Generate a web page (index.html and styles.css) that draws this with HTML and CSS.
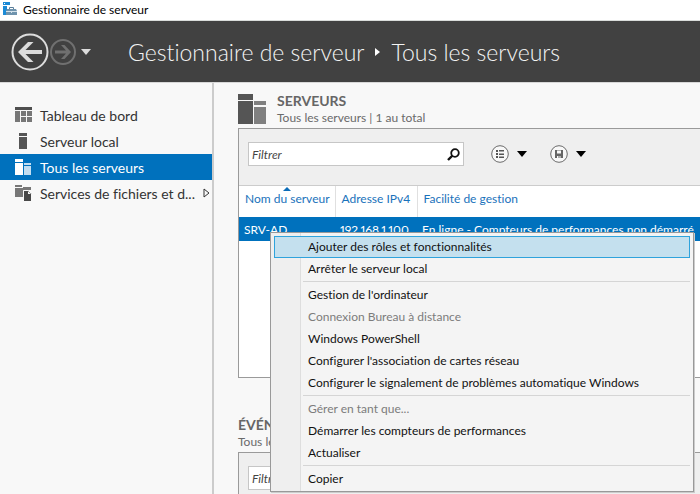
FILE: index.html
```html
<!DOCTYPE html>
<html lang="fr">
<head>
<meta charset="utf-8">
<title>Gestionnaire de serveur</title>
<link rel="stylesheet" href="styles.css">
</head>
<body>
<div class="window">
  <div class="titlebar">
    <svg class="app-icon" width="14" height="14" viewBox="0 0 14 14" aria-hidden="true">
      <path fill="#1b8ad6" d="M0 0h7v3H0zM0 4h4v9H0z"/>
      <path fill="#fff" d="M1 1h1v1H1z"/>
      <path fill="none" stroke="#5b7f9b" d="M6.500 7V5.500h4V7"/>
      <path fill="#6f93ad" d="M4 7h9l1 2v4H3V9z"/>
      <path fill="#d5e2eb" d="M3 9h11v1H3zM8 9h1v2H8z"/>
    </svg>
    <span>Gestionnaire de serveur</span>
  </div>

  <header class="banner">
    <div class="history">
      <button class="icon-button" type="button" aria-label="Précédent">
        <svg width="38" height="38" viewBox="0 0 38 38"><circle cx="19" cy="19" r="17.500" fill="none" stroke="#dcdcdc" stroke-width="2"/><path fill="#dcdcdc" d="M7 19L17 9h5.500l-8 8H31v4H14.500l8 8H17z"/></svg>
      </button>
      <button class="icon-button" type="button" aria-label="Suivant" disabled>
        <svg width="26" height="26" viewBox="0 0 26 26"><circle cx="13" cy="13" r="12" fill="none" stroke="#707070" stroke-width="2"/><path fill="#707070" d="M21 13l-6.500-7H11l5 5.500H5v3h11L11 20h3.500z"/></svg>
      </button>
      <button class="icon-button history-more" type="button" aria-label="Historique">
        <svg width="10" height="6" viewBox="0 0 10 6"><path fill="#dcdcdc" d="M0 0h10L5 6z"/></svg>
      </button>
    </div>
    <h1 class="crumbs">
      <span>Gestionnaire de serveur</span>
      <svg width="5" height="8" viewBox="0 0 5 8" aria-hidden="true"><path fill="#fff" d="M0 0l5 4-5 4z"/></svg>
      <span>Tous les serveurs</span>
    </h1>
  </header>

  <div class="body">
    <nav class="sidebar">
      <a class="nav-item" href="#">
        <svg width="17" height="16" viewBox="0 0 17 16"><path fill="#4f4f4f" d="M0 0h17v3H0z"/><path fill="#777" d="M0 4h5v11H0zM6 4h5v5H6zM12 4h5v5h-5zM6 10h5v5H6zM12 10h5v5h-5z"/></svg>
        <span class="nav-label">Tableau de bord</span>
      </a>
      <a class="nav-item" href="#">
        <svg width="17" height="16" viewBox="0 0 17 16"><path fill="#555" d="M4 0h8v3H4zM4 4h8v12H4z"/></svg>
        <span class="nav-label">Serveur local</span>
      </a>
      <a class="nav-item selected" href="#" aria-current="page">
        <svg width="17" height="16" viewBox="0 0 17 16"><path fill="#fff" d="M0 0h8v3H0zM0 4h8v12H0z"/><path fill="#c3def1" d="M9 4h7v2H9zM9 7h7v9H9z"/></svg>
        <span class="nav-label">Tous les serveurs</span>
      </a>
      <a class="nav-item" href="#">
        <svg width="17" height="16" viewBox="0 0 17 16"><path fill="#777" d="M0 0h7v2H0zM0 3h8v9H0zM8 2h8v3H8z"/><path fill="#484848" stroke="#f8f8f8" d="M8.500 5.500h5l3 3v8h-8z"/><path fill="#f8f8f8" d="M13 6v3h3z"/></svg>
        <span class="nav-label">Services de fichiers et d...</span>
        <svg class="expander" width="7" height="10" viewBox="0 0 7 10"><path fill="none" stroke="#333" d="M1 1l5 4-5 4z"/></svg>
      </a>
    </nav>

    <main class="content">
      <section class="tile">
        <div class="tile-head">
          <svg width="28" height="30" viewBox="0 0 28 30" aria-hidden="true"><path fill="#555" d="M0 0h15v6H0zM0 7h15v23H0z"/><path fill="#808080" d="M16 7h12v4H16zM16 13h12v17H16z"/></svg>
          <div>
            <h2 class="tile-title">SERVEURS</h2>
            <p class="tile-sub">Tous les serveurs | 1 au total</p>
          </div>
        </div>
        <div class="panel servers">
          <div class="toolbar">
            <div class="filter">
              <input class="filter-input" type="text" placeholder="Filtrer" aria-label="Filtrer les serveurs">
              <button class="icon-button" type="button" aria-label="Rechercher">
                <svg width="13" height="13" viewBox="0 0 13 13"><circle cx="8" cy="5" r="3.800" fill="none" stroke="#111" stroke-width="1.800"/><path stroke="#111" stroke-width="2.400" d="M5.500 7.500L1 12"/></svg>
              </button>
            </div>
            <button class="icon-button tool" type="button" aria-label="Critères">
              <svg width="18" height="18" viewBox="0 0 18 18"><circle cx="9" cy="9" r="8.300" fill="#f8f8f8" stroke="#6b6b6b"/><path fill="#555" d="M5 5h2v2H5zM8 5h5v1.500H8zM5 8h2v2H5zM8 8.500h5V10H8zM5 11h2v2H5zM8 11.500h5V13H8z"/></svg>
              <svg width="10" height="6" viewBox="0 0 10 6"><path fill="#000" d="M0 0h10L5 6z"/></svg>
            </button>
            <button class="icon-button tool" type="button" aria-label="Enregistrer">
              <svg width="18" height="18" viewBox="0 0 18 18"><circle cx="9" cy="9" r="8.300" fill="#f8f8f8" stroke="#6b6b6b"/><path fill="#666" d="M5 5h8v8H5z"/><path fill="#f8f8f8" d="M7 5.500h4v3H7zM7 11h1.500v2H7zM9.500 11h1v2h-1z"/></svg>
              <svg width="10" height="6" viewBox="0 0 10 6"><path fill="#000" d="M0 0h10L5 6z"/></svg>
            </button>
          </div>
          <table class="grid">
            <thead>
              <tr>
                <th class="col-name" aria-sort="ascending">Nom du serveur<svg class="sort" width="8" height="4" viewBox="0 0 8 4"><path fill="#0b6cb8" d="M0 4l4-4 4 4z"/></svg></th>
                <th class="col-ip">Adresse IPv4</th>
                <th>Facilité de gestion</th>
              </tr>
            </thead>
            <tbody>
              <tr>
                <td>SRV-AD</td>
                <td>192.168.1.100</td>
                <td>En ligne - Compteurs de performances non démarré</td>
              </tr>
            </tbody>
          </table>

          <div class="menu" role="menu">
            <button class="menu-item active" type="button" role="menuitem">Ajouter des rôles et fonctionnalités</button>
            <button class="menu-item" type="button" role="menuitem">Arrêter le serveur local</button>
            <hr class="menu-line">
            <button class="menu-item" type="button" role="menuitem">Gestion de l'ordinateur</button>
            <button class="menu-item" type="button" role="menuitem" disabled>Connexion Bureau à distance</button>
            <button class="menu-item" type="button" role="menuitem">Windows PowerShell</button>
            <button class="menu-item" type="button" role="menuitem">Configurer l'association de cartes réseau</button>
            <button class="menu-item" type="button" role="menuitem">Configurer le signalement de problèmes automatique Windows</button>
            <hr class="menu-line">
            <button class="menu-item" type="button" role="menuitem" disabled>Gérer en tant que...</button>
            <button class="menu-item" type="button" role="menuitem">Démarrer les compteurs de performances</button>
            <button class="menu-item" type="button" role="menuitem">Actualiser</button>
            <hr class="menu-line">
            <button class="menu-item" type="button" role="menuitem">Copier</button>
          </div>
        </div>
      </section>

      <section class="tile">
        <div class="tile-head">
          <div>
            <h2 class="tile-title">ÉVÉN</h2>
            <p class="tile-sub">Tous le</p>
          </div>
        </div>
        <div class="panel">
          <div class="toolbar">
            <div class="filter">
              <input class="filter-input" type="text" placeholder="Filtrer" aria-label="Filtrer les événements">
            </div>
          </div>
        </div>
      </section>
    </main>
  </div>
</div>
</body>
</html>
```
FILE: styles.css
```css
* {
  box-sizing: border-box;
}

body {
  margin: 0;
  font-family: Lato, "Open Sans", sans-serif;
  font-size: 12px;
  font-variant-ligatures: none;
  color: #333;
  background: #f8f8f8;
}

svg {
  flex: none;
  display: block;
}

h1, h2, p {
  margin: 0;
}

button, input {
  font: inherit;
  font-variant-ligatures: none;
}

.window {
  display: flex;
  flex-direction: column;
  height: 100vh;
  overflow: hidden;
}

.titlebar {
  display: flex;
  align-items: center;
  gap: 6px;
  flex: none;
  height: 21px;
  padding: 0 3px 2px;
  color: #000;
  background: #fff;
  border-bottom: 1px solid #d9dcda;
}

.banner {
  display: flex;
  align-items: center;
  flex: none;
  height: 61px;
  padding: 0 11px;
  background: #414141;
}

.icon-button {
  display: flex;
  align-items: center;
  padding: 0;
  border: 0;
  background: none;
}

.history {
  display: flex;
  align-items: center;
  gap: 1px;
  width: 117px;
}

.history-more {
  margin-left: 4px;
}

.crumbs {
  display: flex;
  align-items: center;
  gap: 11px;
  font-size: 23px;
  font-weight: 300;
  color: #f4f4f4;
  white-space: nowrap;
}

.body {
  display: flex;
  flex: 1;
  min-height: 0;
  border-top: 1px solid #d8d8d8;
}

.sidebar {
  flex: none;
  width: 214px;
  padding-top: 19px;
  border-right: 2px solid #ccc;
}

.nav-item {
  display: flex;
  align-items: center;
  gap: 8px;
  height: 26px;
  padding: 0 4px 0 15px;
  font-size: 14px;
  color: #333;
  text-decoration: none;
  white-space: nowrap;
}

.nav-item.selected {
  color: #fff;
  background: #0071bd;
}

.expander {
  margin-left: auto;
}

.content {
  flex: 1;
  min-width: 0;
  padding: 11px 0 0 24px;
}

.tile {
  margin-bottom: 40px;
}

.tile-head {
  display: flex;
  gap: 11px;
  height: 34px;
}

.tile-title {
  font-size: 14px;
  line-height: 14px;
  color: #666;
}

.tile-sub {
  font-size: 12px;
  line-height: 19px;
  color: #6a6a6a;
}

.panel {
  position: relative;
  border: 1px solid #9a9a9a;
  border-right: 0;
  background: #efefef;
}

.servers {
  z-index: 1;
  min-height: 250px;
  background: #fff;
}

.toolbar {
  display: flex;
  align-items: center;
  gap: 27px;
  height: 57px;
  padding: 0 9px 6px;
  background: #efefef;
  border-bottom: 1px solid #ccc;
}

.filter {
  display: flex;
  align-items: center;
  width: 216px;
  height: 24px;
  padding: 0 3px;
  background: #fff;
  border: 1px solid #c6c6c6;
}

.filter-input {
  flex: 1;
  min-width: 0;
  padding: 0;
  border: 0;
  outline: 0;
  background: none;
  font-style: italic;
}

.filter-input::placeholder {
  color: #444;
  opacity: 1;
}

.tool {
  gap: 8px;
}

.tool + .tool {
  margin-left: -4px;
}

.grid {
  width: 100%;
  table-layout: fixed;
  border-collapse: collapse;
  white-space: nowrap;
}

.grid th {
  position: relative;
  height: 31px;
  padding: 0 0 6px 6px;
  font-weight: 400;
  text-align: left;
  color: #1a72bb;
  border-right: 1px solid #e0e0e0;
}

.grid th:last-child {
  border-right: 0;
}

.grid td {
  height: 24px;
  padding: 0 0 0 5px;
  font-variant-numeric: proportional-nums;
  color: #fff;
  background: #0071bd;
}

.col-name {
  width: 96px;
}

.col-ip {
  width: 82px;
}

.sort {
  position: absolute;
  top: 1px;
  left: 44px;
}

.menu {
  position: absolute;
  top: 103px;
  left: 31px;
  right: 6px;
  padding: 3px 3px 1px;
  background: linear-gradient(90deg, #efefef 29px, #dedede 29px 30px, #f4f4f4 30px);
  border: 1px solid #999;
  box-shadow: 1px 1px 0 #ccc;
}

.menu-item {
  display: block;
  width: 100%;
  height: 22px;
  padding: 0 0 0 33px;
  border: 1px solid transparent;
  background: none;
  line-height: 20px;
  text-align: left;
  color: #111;
  white-space: nowrap;
}

.menu-item:disabled {
  color: #7c7c7c;
}

.menu-item.active {
  background: #c4e0ee;
  border-color: #2fa3dc;
}

.menu-line {
  height: 1px;
  margin: 1px 0 2px 29px;
  border: 0;
  background: #d5d5d5;
}
```
